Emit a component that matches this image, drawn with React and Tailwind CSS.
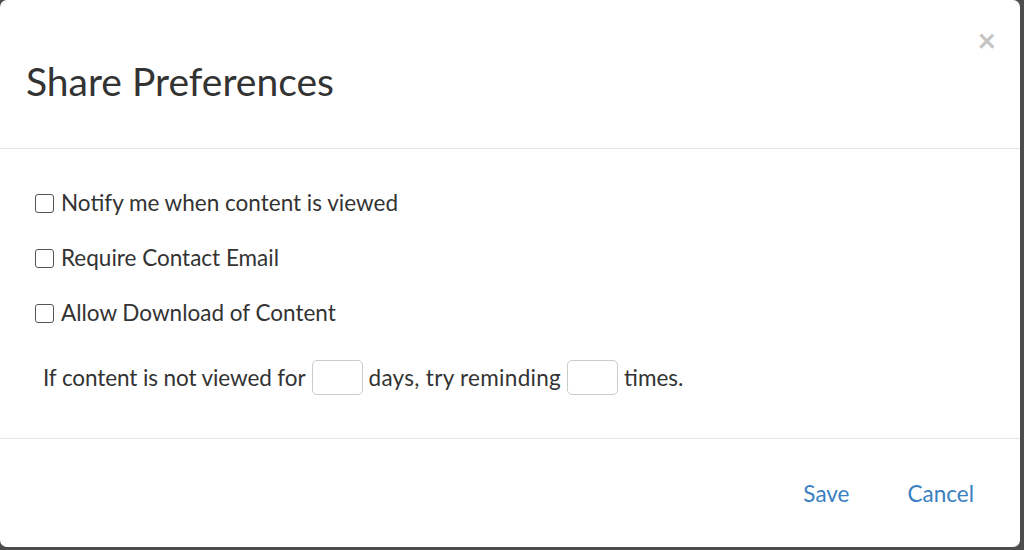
import { useState } from 'react';

const font = { fontFamily: 'Lato, "Open Sans", sans-serif' };

function Check({ label, checked, onChange }) {
  return (
    <label className="flex items-center h-[30px] cursor-pointer">
      <input
        type="checkbox"
        checked={checked}
        onChange={onChange}
        className="appearance-none w-[19px] h-[19px] ml-[35px] mr-[7px] rounded-[3px] border border-[#555] bg-white checked:bg-[#3a7fc1]"
      />
      <span className="text-[22.5px] text-[#333]">{label}</span>
    </label>
  );
}

export default function App() {
  const [prefs, setPrefs] = useState({ notify: false, email: false, download: false });
  const [days, setDays] = useState('');
  const [times, setTimes] = useState('');

  const toggle = (k) => setPrefs((p) => ({ ...p, [k]: !p[k] }));

  return (
    <div className="w-full h-[550px] bg-[#4d4d4d] overflow-hidden" style={font}>
      {/* ── Modal ── */}
      <div className="w-[1020px] h-[547px] bg-white rounded-[7px] flex flex-col">
        {/* Header */}
        <div className="relative h-[149px] border-b border-[#e5e5e5] pl-[26px] pt-[58px]">
          <h2 className="text-[39px] leading-[46px] text-[#333]">Share Preferences</h2>
          <button className="absolute top-[24px] right-[24px] text-[32px] leading-none font-bold text-[#c4c4c4]">
            ×
          </button>
        </div>

        {/* Body */}
        <div className="h-[290px] border-b border-[#e5e5e5] pt-[39px] flex flex-col gap-[25px]">
          <Check label="Notify me when content is viewed" checked={prefs.notify} onChange={() => toggle('notify')} />
          <Check label="Require Contact Email" checked={prefs.email} onChange={() => toggle('email')} />
          <Check label="Allow Download of Content" checked={prefs.download} onChange={() => toggle('download')} />
          <div className="flex items-center pl-[43px] mt-[7px] text-[22.5px] text-[#333]">
            <span className="tracking-[-0.1px]">If content is not viewed for</span>
            <input
              value={days}
              onChange={(e) => setDays(e.target.value)}
              className="w-[51px] h-[35px] mx-[6px] rounded-[5px] border border-[#ccc] px-2 text-[18px] outline-none"
            />
            <span className="tracking-[0.3px]">days, try reminding</span>
            <input
              value={times}
              onChange={(e) => setTimes(e.target.value)}
              className="w-[51px] h-[35px] mx-[6px] rounded-[5px] border border-[#ccc] px-2 text-[18px] outline-none"
            />
            <span>times.</span>
          </div>
        </div>

        {/* Footer */}
        <div className="flex-1 flex items-center justify-end gap-[58px] pr-[46px] pt-[2px] text-[22.5px] text-[#3a7fc1]">
          <button>Save</button>
          <button>Cancel</button>
        </div>
      </div>
    </div>
  );
}
